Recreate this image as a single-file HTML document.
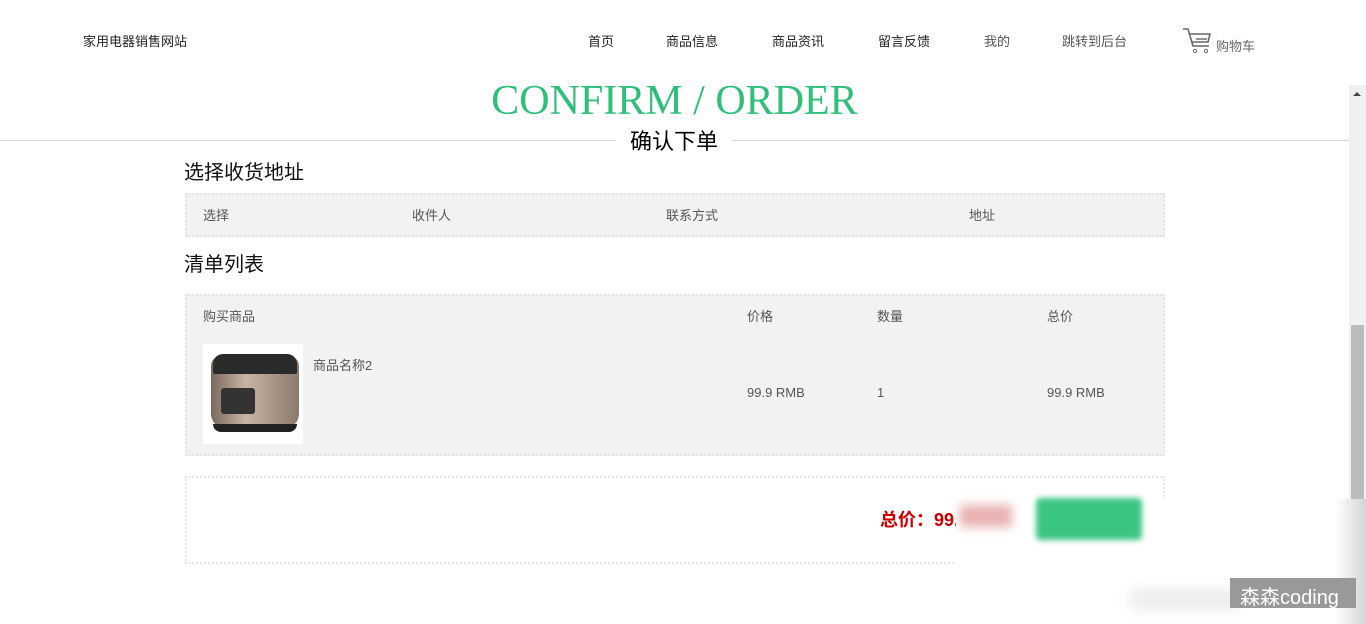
<!DOCTYPE html>
<html><head><meta charset="utf-8"><style>
*{margin:0;padding:0;box-sizing:border-box}
body{width:1366px;height:624px;overflow:hidden;background:#fff;font-family:"Liberation Sans","Noto Sans CJK SC",sans-serif;position:relative;color:#333}
.abs{position:absolute}
.nav{font-size:13px;color:#222;top:31px}
.tbl{position:absolute;left:185px;width:980px;background:#f2f2f2;border:2px dotted #e4e4e4}
.gray{color:#555;font-size:13px}
</style></head><body>
<div class="abs" style="left:83px;top:31px;font-size:13px;color:#222">家用电器销售网站</div>
<div class="abs nav" style="left:588px">首页</div>
<div class="abs nav" style="left:666px">商品信息</div>
<div class="abs nav" style="left:772px">商品资讯</div>
<div class="abs nav" style="left:878px">留言反馈</div>
<div class="abs nav" style="left:984px;color:#555">我的</div>
<div class="abs nav" style="left:1062px;color:#555">跳转到后台</div>
<svg class="abs" style="left:1182px;top:27px" width="30" height="27" viewBox="0 0 30 27"><path d="M1 2h5l5 17h16M8 7h20l-2 8H10" fill="none" stroke="#666" stroke-width="1.6"/><circle cx="13" cy="24" r="1.6" fill="none" stroke="#666"/><circle cx="24" cy="24" r="1.6" fill="none" stroke="#666"/><path d="M14 12h11" stroke="#666" stroke-width="1.4"/></svg>
<div class="abs" style="left:1216px;top:36px;font-size:13px;color:#666">购物车</div>
<div class="abs" style="left:0;width:1349px;top:140px;height:1px;background:#d6d6d6"></div>
<div class="abs" style="left:0;width:1349px;top:77px;text-align:center;font-family:'Liberation Serif',serif;font-size:42px;color:#2fbf78">CONFIRM / ORDER</div>
<div class="abs" style="left:616px;width:116px;top:124px;text-align:center;background:#fff;font-size:22px;color:#000">确认下单</div>
<div class="abs" style="left:184px;top:156px;font-size:20px;color:#111">选择收货地址</div>
<div class="tbl gray" style="top:193px;height:44px">
<span class="abs" style="left:16px;top:10px">选择</span><span class="abs" style="left:225px;top:10px">收件人</span><span class="abs" style="left:479px;top:10px">联系方式</span><span class="abs" style="left:782px;top:10px">地址</span></div>
<div class="abs" style="left:184px;top:248px;font-size:20px;color:#111">清单列表</div>
<div class="tbl gray" style="top:294px;height:162px">
<span class="abs" style="left:16px;top:10px">购买商品</span><span class="abs" style="left:560px;top:10px">价格</span><span class="abs" style="left:690px;top:10px">数量</span><span class="abs" style="left:860px;top:10px">总价</span>
<div class="abs" style="left:16px;top:48px;width:100px;height:100px;background:#fff">
<div class="abs" style="left:8px;top:12px;width:88px;height:72px;border-radius:10px 10px 14px 14px;background:linear-gradient(90deg,#7a6a5e,#c7b4a4 40%,#8b7a6c);"></div>
<div class="abs" style="left:10px;top:10px;width:84px;height:20px;border-radius:10px 10px 2px 2px;background:#2a2a2a"></div>
<div class="abs" style="left:18px;top:44px;width:34px;height:26px;background:#333;border-radius:3px"></div>
<div class="abs" style="left:10px;top:80px;width:84px;height:8px;border-radius:0 0 10px 10px;background:#222"></div></div>
<span class="abs" style="left:126px;top:59px">商品名称2</span>
<span class="abs" style="left:560px;top:89px">99.9 RMB</span><span class="abs" style="left:690px;top:89px">1</span><span class="abs" style="left:860px;top:89px">99.9 RMB</span></div>
<div class="abs" style="left:185px;top:476px;width:980px;height:88px;border:2px dotted #e8e8e8"></div>
<div class="abs" style="left:880px;top:506px;font-size:18px;font-weight:bold;color:#c00">总价：99.</div>
<div class="abs" style="left:956px;top:499px;width:410px;height:125px;background:#fff"></div>
<div class="abs" style="left:960px;top:505px;width:52px;height:22px;background:#e9b0b0;filter:blur(5px)"></div>
<div class="abs" style="left:1036px;top:498px;width:106px;height:42px;background:#3cc483;filter:blur(3px);border-radius:4px"></div>
<div class="abs" style="left:1349px;top:85px;width:17px;height:414px;background:#f0f0f0"></div>
<div class="abs" style="left:1351px;top:325px;width:13px;height:174px;background:#bcbcbc"></div>
<div class="abs" style="left:1353px;top:92px;width:0;height:0;border-left:4px solid transparent;border-right:4px solid transparent;border-bottom:4px solid #444"></div>
<div class="abs" style="left:1336px;top:499px;width:30px;height:125px;background:linear-gradient(90deg,#fff,#d4d4d4)"></div>
<div class="abs" style="left:1130px;top:588px;width:110px;height:22px;background:#eee;filter:blur(6px)"></div>
<div class="abs" style="left:1230px;top:578px;width:126px;height:30px;background:#999;color:#fff;font-size:20px;line-height:40px;padding-left:10px;overflow:hidden">森森coding</div>
</body></html>
